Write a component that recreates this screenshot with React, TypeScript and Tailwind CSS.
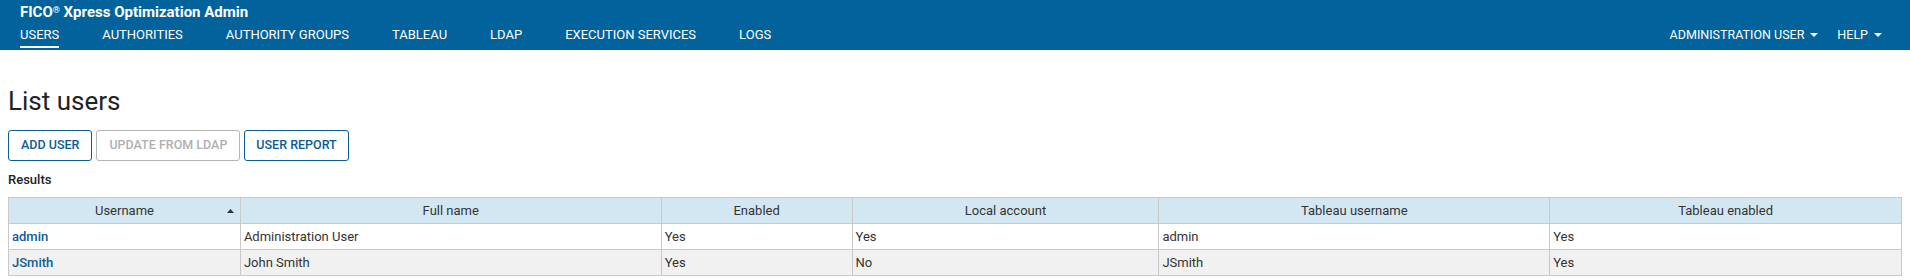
const navLinks = ["USERS", "AUTHORITIES", "AUTHORITY GROUPS", "TABLEAU", "LDAP", "EXECUTION SERVICES", "LOGS"];

const columns = [
  { label: "Username", width: "w-[232px]", sorted: true },
  { label: "Full name", width: "w-[421px]" },
  { label: "Enabled", width: "w-[191px]" },
  { label: "Local account", width: "w-[307px]" },
  { label: "Tableau username", width: "w-[391px]" },
  { label: "Tableau enabled", width: "w-[352px]" },
];

const users = [
  { username: "admin", fullName: "Administration User", enabled: "Yes", local: "Yes", tableauName: "admin", tableauEnabled: "Yes" },
  { username: "JSmith", fullName: "John Smith", enabled: "Yes", local: "No", tableauName: "JSmith", tableauEnabled: "Yes" },
];

function Caret() {
  return (
    <svg width="8" height="4" viewBox="0 0 8 4" className="ml-[6px] inline-block">
      <path d="M0 0h8L4 4z" fill="currentColor" />
    </svg>
  );
}

export default function App() {
  return (
    <div className="min-h-[280px] bg-white font-[Roboto,sans-serif] text-[#222]">
      {/* Header */}
      <header className="h-[50px] bg-[#01629c] px-5 text-white">
        <div className="flex items-start justify-between">
          <div>
            <div className="pt-[3px] text-[15px] font-bold leading-[18px]">
              FICO<sup className="text-[9px]">®</sup> Xpress Optimization Admin
            </div>
            <nav className="mt-[5px] flex gap-[43px]">
              {navLinks.map((link, i) => (
                <a
                  key={link}
                  href="#"
                  className={
                    i === 0
                      ? "border-b-[2px] border-white pb-[2px] text-[13px] leading-[18px]"
                      : "pb-[2px] text-[13px] leading-[18px]"
                  }
                >
                  {link}
                </a>
              ))}
            </nav>
          </div>
          <div className="mt-[26px] flex items-center gap-[19px] pr-[8px] text-[12.5px] leading-[18px]">
            <span className="flex items-center">
              ADMINISTRATION USER
              <Caret />
            </span>
            <span className="flex items-center">
              HELP
              <Caret />
            </span>
          </div>
        </div>
      </header>

      {/* Content */}
      <main className="px-2">
        <h1 className="mt-[35px] text-[26px] leading-[32px] text-[#222]">List users</h1>

        <div className="mt-[13px] flex gap-1">
          <button className="h-[31px] rounded-[3px] border border-[#0b5c96] px-3 text-[12.5px] font-medium text-[#0b5c96]">
            ADD USER
          </button>
          <button disabled className="h-[31px] rounded-[3px] border border-[#b5b5b5] px-3 text-[12.5px] font-medium text-[#b0b0b0]">
            UPDATE FROM LDAP
          </button>
          <button className="h-[31px] rounded-[3px] border border-[#0b5c96] px-[11px] text-[12.5px] font-medium text-[#0b5c96]">
            USER REPORT
          </button>
        </div>

        <div className="mt-[11px] text-[13px] font-medium leading-[16px]">Results</div>

        <table className="mt-[9px] border-collapse text-[13px] text-[#333]">
          <thead>
            <tr className="h-[26px] bg-[#d3e7f3]">
              {columns.map((c) => (
                <th key={c.label} className={`${c.width} relative border border-[#c9c9c9] px-[6px] font-normal`}>
                  {c.label}
                  {c.sorted && (
                    <svg width="7" height="4" viewBox="0 0 7 4" className="absolute right-[6px] top-[11px]">
                      <path d="M0 4h7L3.5 0z" fill="#333" />
                    </svg>
                  )}
                </th>
              ))}
            </tr>
          </thead>
          <tbody>
            {users.map((u, i) => (
              <tr key={u.username} className={i % 2 === 0 ? "h-[26px] bg-white" : "h-[26px] bg-[#f1f1f1]"}>
                <td className="border border-[#c9c9c9] px-[3px] font-medium text-[#0b5c96]">{u.username}</td>
                <td className="border border-[#c9c9c9] px-[3px]">{u.fullName}</td>
                <td className="border border-[#c9c9c9] px-[3px]">{u.enabled}</td>
                <td className="border border-[#c9c9c9] px-[3px]">{u.local}</td>
                <td className="border border-[#c9c9c9] px-[3px]">{u.tableauName}</td>
                <td className="border border-[#c9c9c9] px-[3px]">{u.tableauEnabled}</td>
              </tr>
            ))}
          </tbody>
        </table>
      </main>
    </div>
  );
}
